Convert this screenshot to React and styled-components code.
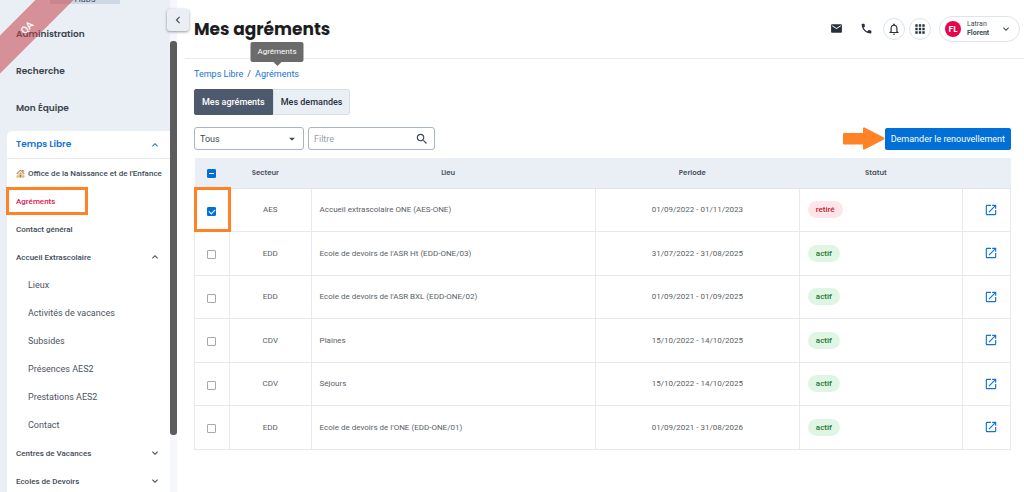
import { useState } from "react";
import styled, { createGlobalStyle } from "styled-components";
import {
    MdApps,
    MdArrowDropDown,
    MdEmail,
    MdExpandLess,
    MdExpandMore,
    MdChevronLeft,
    MdNotificationsNone,
    MdOpenInNew,
    MdPhone,
    MdSearch,
} from "react-icons/md";

const heading = `Poppins, Inter, sans-serif`;

const topLinks = ['Administration', 'Recherche', 'Mon Équipe'];

const subLinks = [
    'Lieux',
    'Activités de vacances',
    'Subsides',
    'Présences AES2',
    'Prestations AES2',
    'Contact',
];

const agreements = [
    { id: 1, sector: 'AES', place: 'Accueil extrascolaire ONE (AES-ONE)', period: '01/09/2022 - 01/11/2023', status: 'retiré' },
    { id: 2, sector: 'EDD', place: "Ecole de devoirs de l'ASR Ht (EDD-ONE/03)", period: '31/07/2022 - 31/08/2025', status: 'actif' },
    { id: 3, sector: 'EDD', place: "Ecole de devoirs de l'ASR BXL (EDD-ONE/02)", period: '01/09/2021 - 01/09/2025', status: 'actif' },
    { id: 4, sector: 'CDV', place: 'Plaines', period: '15/10/2022 - 14/10/2025', status: 'actif' },
    { id: 5, sector: 'CDV', place: 'Séjours', period: '15/10/2022 - 14/10/2025', status: 'actif' },
    { id: 6, sector: 'EDD', place: "Ecole de devoirs de l'ONE (EDD-ONE/01)", period: '01/09/2021 - 31/08/2026', status: 'actif' },
];

function HouseIcon(){
    return(
        <svg width="9" height="9" viewBox="0 0 18 18" aria-hidden="true">
            <path d="M3 8h12v9H3z" fill="#f3d9a4" />
            <path d="M9 1 0.5 9l1.600 1.400L9 4.200l6.900 6.200L17.500 9z" fill="#c98a5a" />
            <path d="M12.500 2h2.500v4l-2.500-2z" fill="#8d5a3c" />
            <path d="M7.300 11.500h3.400V17H7.300z" fill="#b07a50" />
            <circle cx="9" cy="8.300" r="1.500" fill="#6a9fc4" />
            <circle cx="3.200" cy="15" r="2.400" fill="#e6bb68" />
            <circle cx="14.800" cy="15" r="2.400" fill="#e6bb68" />
        </svg>
    )
}

function Sidebar(){
    return(
        <SidePanel>
            <SideContent>
                <HubChip>Hubs</HubChip>
                {topLinks.map(label => <TopLink href="#" key={label}>{label}</TopLink>)}
                <OpenGroup>
                    <GroupTitle type="button" aria-expanded="true">
                        <span>Temps Libre</span>
                        <MdExpandLess size={12} />
                    </GroupTitle>
                    <SideLink href="#"><HouseIcon /><span>Office de la Naissance et de l'Enfance</span></SideLink>
                    <ActiveLink href="#" aria-current="page">Agréments</ActiveLink>
                    <SideLink href="#">Contact général</SideLink>
                    <SideToggle type="button" aria-expanded="true">Accueil Extrascolaire<MdExpandLess size={12} /></SideToggle>
                    {subLinks.map(label => <SubLink href="#" key={label}>{label}</SubLink>)}
                    <SideToggle type="button" aria-expanded="false">Centres de Vacances<MdExpandMore size={12} /></SideToggle>
                    <SideToggle type="button" aria-expanded="false">Ecoles de Devoirs<MdExpandMore size={12} /></SideToggle>
                </OpenGroup>
            </SideContent>
            <ScrollTrack><ScrollThumb /></ScrollTrack>
            <Ribbon>QA</Ribbon>
            <CollapseButton type="button" aria-label="Réduire le menu"><MdChevronLeft size={14} /></CollapseButton>
        </SidePanel>
    )
}

function Header(){
    return(
        <TopBar>
            <PageTitle>Mes agréments</PageTitle>
            <Tools>
                <ToolGroup $gap="8px">
                    <ToolButton type="button" aria-label="Messages"><MdEmail size={13} /></ToolButton>
                    <ToolButton type="button" aria-label="Téléphone"><MdPhone size={13} /></ToolButton>
                </ToolGroup>
                <ToolGroup $gap="4px">
                    <ToolButton type="button" aria-label="Notifications" $round><MdNotificationsNone size={14} /></ToolButton>
                    <ToolButton type="button" aria-label="Applications" $round><MdApps size={14} /></ToolButton>
                </ToolGroup>
                <UserButton type="button">
                    <Avatar>FL</Avatar>
                    <UserName>
                        <span>Latran</span>
                        <strong>Florent</strong>
                    </UserName>
                    <MdExpandMore size={12} />
                </UserButton>
            </Tools>
        </TopBar>
    )
}

function App(){
    const [selected, setSelected] = useState([1]);
    const [filter, setFilter] = useState('');

    const toggle = id => {
        setSelected(selected.includes(id) ? selected.filter(s => s !== id) : [...selected, id]);
    }
    const toggleAll = () => {
        setSelected(selected.length === agreements.length ? [] : agreements.map(a => a.id));
    }
    const partial = selected.length > 0 && selected.length < agreements.length;
    const rows = agreements.filter(a => a.place.toLowerCase().includes(filter.toLowerCase()));

    return(
        <Page>
            <GlobalStyle />
            <Sidebar />
            <Main>
                <Header />
                <Content>
                    <Breadcrumb aria-label="Fil d'Ariane">
                        <a href="#">Temps Libre</a>
                        <span>/</span>
                        <Crumb>
                            <a href="#">Agréments</a>
                            <Tooltip role="tooltip">Agréments</Tooltip>
                        </Crumb>
                    </Breadcrumb>
                    <Tabs>
                        <Tab type="button" $active>Mes agréments</Tab>
                        <Tab type="button">Mes demandes</Tab>
                    </Tabs>
                    <Filters>
                        <SelectBox>
                            <select aria-label="Secteur" defaultValue="Tous">
                                <option>Tous</option>
                                <option>AES</option>
                                <option>CDV</option>
                                <option>EDD</option>
                            </select>
                            <MdArrowDropDown size={14} />
                        </SelectBox>
                        <SearchBox>
                            <input
                                type="text"
                                aria-label="Filtre"
                                placeholder="Filtre"
                                value={filter}
                                onChange={e => setFilter(e.target.value)}
                            />
                            <MdSearch size={14} />
                        </SearchBox>
                        <Renewal>
                            <Arrow viewBox="0 0 42 23" aria-hidden="true">
                                <path d="M1 6h19V1.500q0-1.500 1.500-1L41 10.500q1 1 0 2L21.500 22.500q-1.500.5-1.500-1V17.500H1q-1 0-1-1V7q0-1 1-1z" />
                            </Arrow>
                            <PrimaryButton type="button">Demander le renouvellement</PrimaryButton>
                        </Renewal>
                    </Filters>
                    <Table>
                        <colgroup>
                            <Col $width="35px" />
                            <Col $width="10%" />
                            <Col />
                            <Col $width="25%" />
                            <Col $width="20%" />
                            <Col $width="48px" />
                        </colgroup>
                        <thead>
                            <tr>
                                <CheckHead>
                                    <Check
                                        type="checkbox"
                                        aria-label="Tout sélectionner"
                                        $partial={partial}
                                        checked={selected.length > 0}
                                        onChange={toggleAll}
                                    />
                                </CheckHead>
                                <HeadCell>Secteur</HeadCell>
                                <HeadCell>Lieu</HeadCell>
                                <HeadCell>Periode</HeadCell>
                                <HeadCell>Statut</HeadCell>
                                <HeadCell />
                            </tr>
                        </thead>
                        <tbody>
                            {rows.map(row => (
                                <Row key={row.id}>
                                    <CheckCell $marked={row.id === 1}>
                                        <Check
                                            type="checkbox"
                                            aria-label={row.place}
                                            checked={selected.includes(row.id)}
                                            onChange={() => toggle(row.id)}
                                        />
                                    </CheckCell>
                                    <Cell $center>{row.sector}</Cell>
                                    <Cell>{row.place}</Cell>
                                    <Cell $center>{row.period}</Cell>
                                    <Cell><Status $off={row.status !== 'actif'}>{row.status}</Status></Cell>
                                    <Cell $center>
                                        <OpenLink href="#" aria-label={`Ouvrir ${row.place}`}><MdOpenInNew size={14} /></OpenLink>
                                    </Cell>
                                </Row>
                            ))}
                        </tbody>
                    </Table>
                </Content>
            </Main>
        </Page>
    )
}

const GlobalStyle = createGlobalStyle`
    * {
        box-sizing: border-box;
    }
    body {
        margin: 0;
        overflow: hidden;
        background: #fff;
        color: #414b57;
        font-family: Roboto, sans-serif;
        font-size: 9px;
    }
    a {
        text-decoration: none;
    }
    button, input, select {
        font-family: inherit;
        font-size: inherit;
        color: inherit;
    }
    button {
        padding: 0;
        border: none;
        background: none;
        cursor: pointer;
    }
    svg {
        flex: none;
    }
`
const Page = styled.div`
    display: flex;
    height: 100vh;
`
const SidePanel = styled.aside`
    position: relative;
    display: flex;
    flex: none;
    width: 177px;
    background-color: #eaeff6;
`
const SideContent = styled.nav`
    display: flex;
    flex-direction: column;
    flex: 1;
    overflow: hidden;
`
const HubChip = styled.div`
    display: flex;
    flex: none;
    align-items: flex-end;
    align-self: center;
    justify-content: center;
    width: 70px;
    height: 16px;
    margin-top: -12px;
    margin-bottom: 12px;
    background-color: #cfd9e6;
    font-size: 9px;
    line-height: 10px;
`
const TopLink = styled.a`
    flex: none;
    padding: 9px 16px;
    color: #3c434c;
    font-family: ${heading};
    font-size: 9px;
    font-weight: 600;
    line-height: 19px;
`
const OpenGroup = styled.div`
    flex: none;
    margin-left: 7px;
    margin-top: 4px;
    border-radius: 5px 0 0 0;
    background-color: #fff;
`
const GroupTitle = styled.button`
    display: flex;
    align-items: center;
    justify-content: space-between;
    width: 100%;
    height: 28px;
    padding: 0 9px;
    border-bottom: 1px solid #e6e9ee;
    color: #1673d6;
    font-family: ${heading};
    font-size: 9px;
    font-weight: 600;
`
const SideLink = styled.a`
    display: flex;
    align-items: center;
    gap: 3px;
    height: 28px;
    padding: 0 9px;
    color: #414b57;
    font-size: 8px;
    font-weight: 500;
    white-space: nowrap;
`
const ActiveLink = styled(SideLink)`
    width: 82px;
    margin-left: -1px;
    padding: 0 7px;
    border: 3px solid #ff8326;
    color: #e3154f;
`
const SideToggle = styled.button`
    display: flex;
    align-items: center;
    justify-content: space-between;
    width: 100%;
    height: 28px;
    padding: 0 9px;
    font-size: 8px;
    font-weight: 500;
`
const SubLink = styled.a`
    display: flex;
    align-items: center;
    height: 28px;
    padding: 0 21px;
    color: #4c545e;
    font-size: 9px;
`
const ScrollTrack = styled.div`
    width: 7px;
    padding-top: 41px;
    background-color: #f5f7fc;
`
const ScrollThumb = styled.div`
    height: 394px;
    border-radius: 3px;
    background-color: #5c5c5c;
`
const Ribbon = styled.div`
    position: absolute;
    top: 14px;
    left: -48px;
    width: 150px;
    height: 27px;
    background-color: rgba(197, 66, 72, 0.55);
    color: #fff;
    font-size: 10px;
    font-weight: 500;
    line-height: 27px;
    text-align: center;
    transform: rotate(-45deg);
`
const CollapseButton = styled.button`
    position: absolute;
    top: 9px;
    right: -12px;
    display: flex;
    align-items: center;
    justify-content: center;
    width: 22px;
    height: 22px;
    border-radius: 3px;
    background-color: #eaeff6;
    box-shadow: 0 1px 3px rgba(0, 0, 0, 0.4);
`
const Main = styled.main`
    display: flex;
    flex-direction: column;
    flex: 1;
    min-width: 0;
`
const TopBar = styled.header`
    display: flex;
    align-items: center;
    justify-content: space-between;
    height: 59px;
    margin-left: 8px;
    padding: 0 4px 1px 9px;
    border-bottom: 1px solid #e9ebee;
`
const PageTitle = styled.h1`
    margin: 0;
    color: #1d1d1f;
    font-family: ${heading};
    font-size: 17px;
    font-weight: 700;
`
const Tools = styled.div`
    display: flex;
    align-items: center;
    gap: 6px;
`
const ToolGroup = styled.div`
    display: flex;
    gap: ${props => props.$gap};
`
const ToolButton = styled.button`
    display: flex;
    align-items: center;
    justify-content: center;
    width: 22px;
    height: 22px;
    border: ${props => props.$round ? '1px solid #dde4ed' : 'none'};
    border-radius: 50%;
    color: #27313d;
`
const UserButton = styled.button`
    display: flex;
    align-items: center;
    width: 81px;
    height: 26px;
    margin-left: 2px;
    padding: 0 7px 0 5px;
    border: 1px solid #dde4ed;
    border-radius: 13px;
    text-align: left;
`
const Avatar = styled.span`
    display: flex;
    align-items: center;
    justify-content: center;
    width: 16px;
    height: 16px;
    border-radius: 50%;
    background-color: #e6054b;
    color: #fff;
    font-family: ${heading};
    font-size: 9px;
    font-weight: 600;
    line-height: 16px;
`
const UserName = styled.span`
    display: flex;
    flex-direction: column;
    flex: 1;
    margin-left: 6px;
    font-size: 7px;
    line-height: 9px;
`
const Content = styled.div`
    padding: 8px 13px 0 17px;
`
const Breadcrumb = styled.nav`
    display: flex;
    gap: 4px;
    font-size: 9px;
    font-weight: 400;
    line-height: 14px;

    a {
        color: #1673d6;
    }
`
const Crumb = styled.span`
    position: relative;
`
const Tooltip = styled.span`
    position: absolute;
    bottom: 19px;
    left: 50%;
    padding: 3px 7px;
    border-radius: 2px;
    background-color: #6b6b6b;
    color: #fff;
    font-size: 8px;
    transform: translateX(-50%);

    &::after {
        content: "";
        position: absolute;
        top: 100%;
        left: 50%;
        border: 4px solid transparent;
        border-top-color: #6b6b6b;
        transform: translateX(-50%);
    }
`
const Tabs = styled.div`
    display: flex;
    margin-top: 8px;
`
const Tab = styled.button`
    height: 26px;
    padding: 0 7px;
    border: 1px solid ${props => props.$active ? '#4d5a6d' : '#d5deea'};
    border-radius: ${props => props.$active ? '2px 0 0 2px' : '0 2px 2px 0'};
    background-color: ${props => props.$active ? '#4d5a6d' : '#eaeff6'};
    color: ${props => props.$active ? '#fff' : '#27313d'};
    font-size: 9px;
    font-weight: 500;
`
const Filters = styled.div`
    display: flex;
    gap: 4px;
    margin-top: 12px;
`
const Field = styled.div`
    display: flex;
    align-items: center;
    height: 23px;
    padding: 0 5px;
    border: 1px solid #aab4c8;
    border-radius: 3px;

    select, input {
        flex: 1;
        min-width: 0;
        padding: 0;
        border: none;
        outline: none;
        appearance: none;
        background: none;
        font-size: 9px;
    }
    input::placeholder {
        color: #9aa0a8;
    }
`
const SelectBox = styled(Field)`
    width: 110px;
    padding-right: 4px;
`
const SearchBox = styled(Field)`
    width: 127px;
`
const Renewal = styled.div`
    display: flex;
    align-items: center;
    margin-left: auto;
`
const Arrow = styled.svg`
    width: 42px;
    height: 23px;
    fill: #ff8326;
`
const PrimaryButton = styled.button`
    height: 22px;
    padding: 0 6px;
    border-radius: 2px;
    background-color: #0070d8;
    color: #fff;
    font-size: 9px;
    font-weight: 400;
`
const Table = styled.table`
    width: 100%;
    margin-top: 8px;
    border-collapse: collapse;
    table-layout: fixed;
`
const Col = styled.col`
    width: ${props => props.$width || 'auto'};
`
const HeadCell = styled.th`
    height: 30px;
    padding: 0 10px 0 0;
    border-bottom: 1px solid #dfe5ee;
    background-color: #eaeff6;
    color: #4c545e;
    font-family: ${heading};
    font-size: 7px;
    font-weight: 600;
`
const CheckHead = styled(HeadCell)`
    padding: 2px 1px 0 0;
`
const Row = styled.tr`
    height: 43px;

    &:nth-child(even) {
        height: 44px;
    }
`
const Cell = styled.td`
    padding: 0 ${props => props.$center ? '0' : '8px'};
    border: 1px solid #e6e9ee;
    color: #5a5f66;
    font-size: 8px;
    text-align: ${props => props.$center ? 'center' : 'left'};
`
const CheckCell = styled(Cell)`
    padding: 3px 1px 0 0;
    outline: ${props => props.$marked ? '3px solid #ff8326' : 'none'};
    outline-offset: -2px;
    text-align: center;
`
const mark = "linear-gradient(#fff, #fff) center / 5px 1px no-repeat";
const Check = styled.input`
    width: 9px;
    height: 9px;
    margin: 0;
    border: 1px solid #a8a8a8;
    border-radius: 1px;
    appearance: none;
    vertical-align: middle;

    &:checked {
        border-color: #0070d8;
        background: ${props => props.$partial ? mark + ', ' : ''} #0070d8;
    }
    &:checked::after {
        content: "";
        display: ${props => props.$partial ? 'none' : 'block'};
        width: 3px;
        height: 5px;
        margin: 0 auto;
        border: solid #fff;
        border-width: 0 1px 1px 0;
        transform: rotate(45deg);
    }
`
const Status = styled.span`
    display: inline-block;
    padding: 0 8px;
    border-radius: 9px;
    background-color: ${props => props.$off ? '#ffe5e9' : '#e0f6e5'};
    color: ${props => props.$off ? '#c3172e' : '#21752f'};
    font-size: 8px;
    font-weight: 500;
    line-height: 17px;
`
const OpenLink = styled.a`
    display: inline-flex;
    margin-left: 9px;
    color: #1673d6;
    vertical-align: middle;
`

export default App;
